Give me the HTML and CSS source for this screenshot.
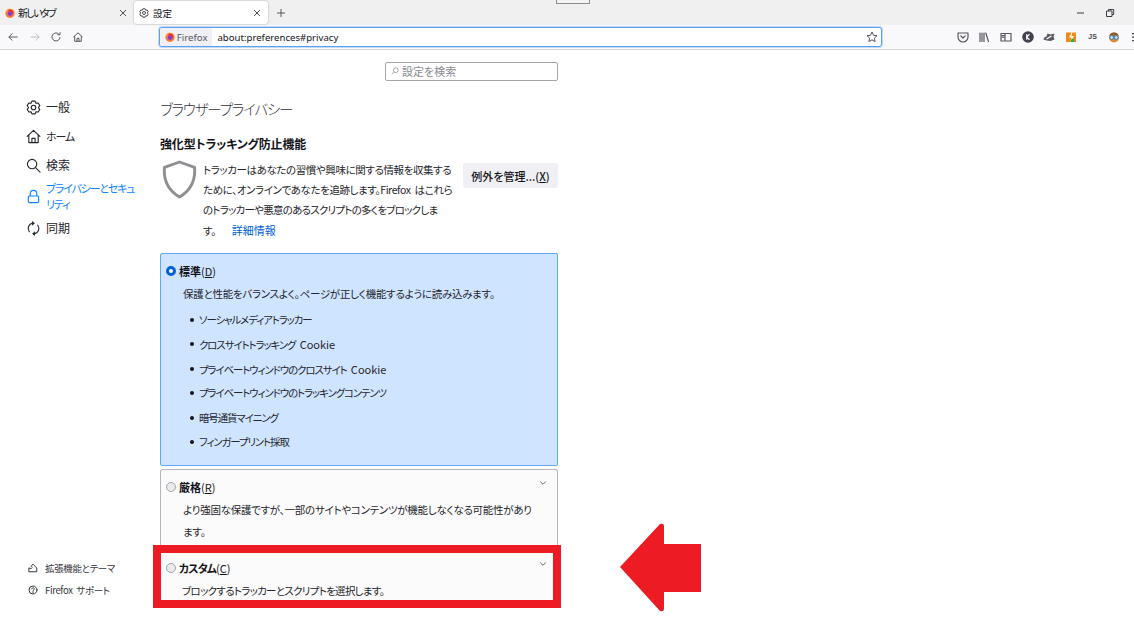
FILE: index.html
```html
<!DOCTYPE html>
<html lang="ja">
<head>
<meta charset="utf-8">
<title>設定</title>
<link rel="stylesheet" href="styles.css">
</head>
<body>
<svg class="defs" width="0" height="0">
  <defs>
    <symbol id="ff" viewBox="0 0 16 16">
      <circle cx="8" cy="8.400" r="7.400" fill="#f9792c"/>
      <path d="M3 2.500C2 4 .6 6 .8 8.400c2-4 6-6 9.400-6C8 1 5 1 3 2.500Z" fill="#ffb32b"/>
      <circle cx="8.200" cy="8.800" r="3.800" fill="#7542e5"/>
      <path d="M5 3c3-1.500 7 0 8 3 .6 2-1 5-4 5 2-1 2-3 .5-4C8 6 5.500 6 5 3Z" fill="#e5304a"/>
    </symbol>
    <symbol id="gear" viewBox="0 0 16 16">
      <path d="M6.310 1.210H9.690L10.600 3.500 13.030 3.140 14.730 6.070 13.200 8 14.730 9.930 13.030 12.860 10.600 12.500 9.690 14.790H6.310L5.400 12.500 2.970 12.860 1.270 9.930 2.800 8 1.270 6.070 2.970 3.140 5.400 3.500Z" fill="none" stroke="currentColor" stroke-width="1.200" stroke-linejoin="round"/>
      <circle cx="8" cy="8" r="2.400" fill="none" stroke="currentColor" stroke-width="1.200"/>
    </symbol>
  </defs>
</svg>

<header class="chrome">
  <div class="tabbar">
    <div class="tab">
      <svg class="tab-icon"><use href="#ff"/></svg>
      <span class="tab-label tab-kana">新しいタブ</span>
      <svg class="tab-close" viewBox="0 0 10 10"><path d="M2 2l6 6M8 2l-6 6"/></svg>
    </div>
    <div class="tab tab-active">
      <svg class="tab-icon"><use href="#gear"/></svg>
      <span class="tab-label">設定</span>
      <svg class="tab-close" viewBox="0 0 10 10"><path d="M2 2l6 6M8 2l-6 6"/></svg>
    </div>
    <svg class="tab-new" viewBox="0 0 10 10"><path d="M5 1v8M1 5h8"/></svg>
    <div class="grip"></div>
    <div class="win-controls">
      <svg class="win-btn" viewBox="0 0 10 10"><path d="M1 5h7"/></svg>
      <svg class="win-btn win-restore" viewBox="0 0 10 10"><path d="M1.500 3h5.500v5.500H1.500zM3.500 3V1.500H8.700V6.500H7"/></svg>
    </div>
  </div>
  <div class="navbar">
    <div class="nav-left">
      <svg class="nav-ico" viewBox="0 0 12 12"><path d="M10.500 6H1.800M5.300 2.500 1.800 6l3.500 3.500"/></svg>
      <svg class="nav-ico nav-off" viewBox="0 0 12 12"><path d="M1.500 6h8.700M6.700 2.500 10.200 6l-3.500 3.500"/></svg>
      <svg class="nav-ico" viewBox="0 0 12 12"><path d="M10 6a4 4 0 1 1-1.300-3M10 1.200V3.800H7.400"/></svg>
      <svg class="nav-ico" viewBox="0 0 12 12"><path d="M1.500 6 6 1.800 10.500 6M2.700 5.200V10.300H9.300V5.200M5 10.300V7.300H7v3"/></svg>
    </div>
    <div class="urlbar">
      <div class="identity">
        <svg class="tab-icon"><use href="#ff"/></svg>
        <span>Firefox</span>
      </div>
      <span class="url">about:preferences#privacy</span>
      <svg class="star" viewBox="0 0 12 12"><path d="M6 1l1.500 3.300 3.500.4-2.600 2.400.7 3.500L6 8.800l-3.100 1.800.7-3.500L1 4.700l3.500-.4Z"/></svg>
    </div>
    <div class="nav-right">
      <svg class="ext" viewBox="0 0 12 12"><path class="ln" d="M1 2h10v4a5 5 0 0 1-10 0ZM3.800 4.800 6 7l2.200-2.200"/></svg>
      <svg class="ext" viewBox="0 0 12 12"><path class="ln" d="M2 2v8.500M4 2v8.500M6 2v8.500M7.800 2l2.700 8.500"/></svg>
      <svg class="ext" viewBox="0 0 12 12"><path class="ln" d="M1 2.500h10v7.500H1zM5 2.500V10M2.300 4.500h1.500M2.300 6.200h1.500"/></svg>
      <svg class="ext" viewBox="0 0 12 12"><circle cx="6" cy="6" r="5.800" fill="#42414d"/><path class="lw" d="M4.700 3.300v5.400M7.500 3.300 4.700 6l2.800 2.700"/></svg>
      <svg class="ext" viewBox="0 0 12 12"><path d="M.5 8.500c0-2 2-3 3-3l1-3 3 1 4-1-1 3 1 3-4 1.500-4-.5Z" fill="#5b5b66"/><path class="lw" d="M3.500 8l5-3"/></svg>
      <svg class="ext" viewBox="0 0 12 12"><path d="M1 1.500h10v9.500H1Z" fill="#f28a18"/><path d="M7.500 0 4 6.500h2.500L5.500 11 9 5H6.500Z" fill="#fff"/><path d="M6 8.500l3-1V11H6Z" fill="#39a845"/></svg>
      <span class="ext ext-js">JS</span>
      <svg class="ext" viewBox="0 0 12 12"><circle cx="6" cy="6.500" r="5" fill="#d98b3a"/><path d="M1.200 4.500C2.500 .5 9.500 .5 10.800 4.500Z" fill="#8a5a2a"/><circle cx="3.700" cy="6.500" r="1.900" fill="#bfe3f5" stroke="#3a78b8"/><circle cx="8.300" cy="6.500" r="1.900" fill="#bfe3f5" stroke="#3a78b8"/></svg>
      <svg class="ext-more" viewBox="0 0 2 12"><path d="M0 2h2v1.200H0zM0 5.500h2v1.200H0zM0 9h2v1.200H0z"/></svg>
    </div>
  </div>
</header>

<div class="page">
  <nav class="side">
    <ul class="side-list">
      <li class="side-item">
        <svg class="side-ico"><use href="#gear"/></svg><span>一般</span>
      </li>
      <li class="side-item">
        <svg class="side-ico" viewBox="0 0 16 16"><path class="ln" d="M1.200 7.800 8 1.500l6.800 6.300M3 6.500v8h10v-8M6.300 14.500V10h3.400v4.500"/></svg><span class="side-kana">ホーム</span>
      </li>
      <li class="side-item">
        <svg class="side-ico" viewBox="0 0 16 16"><circle class="ln" cx="6.500" cy="6.500" r="5"/><path class="ln" d="M10.200 10.200 15 15"/></svg><span>検索</span>
      </li>
      <li class="side-item side-current">
        <svg class="side-ico" viewBox="0 0 16 16"><path class="ln" d="M4.500 7.500V5a3.500 3.500 0 0 1 7 0v2.500M3.500 7.500h9a1.500 1.500 0 0 1 1 1v5a1.500 1.500 0 0 1-1 1h-9a1.500 1.500 0 0 1-1-1v-5a1.500 1.500 0 0 1 1-1Z"/></svg><span class="side-kana">プライバシーとセキュ<br>リティ</span>
      </li>
      <li class="side-item">
        <svg class="side-ico" viewBox="0 0 16 16"><path class="ln" d="M3.500 11.500A5.800 5.800 0 0 1 7 2.300M12.500 4.500A5.800 5.800 0 0 1 9 13.700"/><path d="M6.500 0v5l3-2.500ZM9.500 16v-5l-3 2.500Z" fill="currentColor"/></svg><span>同期</span>
      </li>
    </ul>
    <ul class="side-foot">
      <li class="foot-item">
        <svg class="foot-ico" viewBox="0 0 12 12"><path class="ln" d="M1.500 10.500h9V6L6 1.500 3.500 4 5 5.500 3.500 7 1.500 6Z"/></svg><span>拡張機能とテーマ</span>
      </li>
      <li class="foot-item">
        <svg class="foot-ico" viewBox="0 0 12 12"><circle class="ln" cx="6" cy="6" r="4.800"/><path class="ln" d="M4.500 4.700a1.500 1.500 0 1 1 2.200 1.400c-.5.300-.7.500-.7 1M6 8.200v.9"/></svg><span>Firefox サポート</span>
      </li>
    </ul>
  </nav>

  <main class="content">
    <div class="search">
      <svg class="search-ico" viewBox="0 0 10 10"><circle cx="6" cy="4" r="3"/><path d="M3.800 6.200 1 9"/></svg>
      <span>設定を検索</span>
    </div>
    <h1 class="title">ブラウザープライバシー</h1>
    <h2 class="subtitle">強化型トラッキング防止機能</h2>
    <div class="intro">
      <svg class="shield" viewBox="0 0 36 40"><path d="M18 2 33.500 7.500C34.500 20 30 31 18 38 6 31 1.500 20 2.500 7.500Z"/></svg>
      <p class="intro-text">トラッカーはあなたの習慣や興味に関する情報を収集する<br>ために、オンラインであなたを追跡します。Firefox はこれら<br><span class="intro-tight">のトラッカーや悪意のあるスクリプトの多くをブロックしま</span><br>す。 <a class="link">詳細情報</a></p>
      <div class="btn">例外を管理...(<u>X</u>)</div>
    </div>

    <section class="card card-on">
      <div class="card-head"><span class="radio radio-on"></span><b>標準</b><span>(<u>D</u>)</span></div>
      <p class="card-desc">保護と性能をバランスよく。ページが正しく機能するように読み込みます。</p>
      <ul class="bullets">
        <li>ソーシャルメディアトラッカー</li>
        <li>クロスサイトトラッキング <span class="latin">Cookie</span></li>
        <li>プライベートウィンドウのクロスサイト <span class="latin">Cookie</span></li>
        <li>プライベートウィンドウのトラッキングコンテンツ</li>
        <li>暗号通貨マイニング</li>
        <li>フィンガープリント採取</li>
      </ul>
    </section>

    <section class="card card-off">
      <div class="card-head"><span class="radio"></span><b>厳格</b><span>(<u>R</u>)</span>
        <svg class="chev" viewBox="0 0 8 6"><path d="M1.200 1.500 4 4.300l2.800-2.800"/></svg></div>
      <p class="card-desc">より強固な保護ですが、一部のサイトやコンテンツが機能しなくなる可能性があり<br>ます。</p>
    </section>

    <section class="card card-off card-custom">
      <div class="card-head"><span class="radio"></span><b>カスタム</b><span>(<u>C</u>)</span>
        <svg class="chev" viewBox="0 0 8 6"><path d="M1.200 1.500 4 4.300l2.800-2.800"/></svg></div>
      <p class="card-desc">ブロックするトラッカーとスクリプトを選択します。</p>
    </section>
  </main>
</div>

<div class="mark-box"></div>
<svg class="mark-arrow" viewBox="0 0 81 89"><path d="M40 1Q44 0 44 3V21H81V69H44V86Q44 89 40 88L0 44Z"/></svg>
</body>
</html>
```
FILE: styles.css
```css
* { box-sizing: border-box; }
html, body { margin: 0; height: 620px; overflow: hidden; background: #fff; }
body {
  font-family: "Noto Sans CJK JP", "Liberation Sans", sans-serif;
  font-feature-settings: "palt";
  color: #15141a;
  font-size: 11px;
  position: relative;
}
ul { list-style: none; margin: 0; padding: 0; }
.defs { position: absolute; }
.ln { fill: none; stroke: currentColor; stroke-width: 1.200; stroke-linejoin: round; stroke-linecap: round; }
.lw { fill: none; stroke: #fff; stroke-width: 1.200; }

.chrome { height: 50px; border-bottom: 1px solid #d5d5da; }
.tabbar { height: 25px; background: #f0f0f0; display: flex; align-items: center; padding-left: 1px; position: relative; }
.tab { width: 133px; height: 23px; display: flex; align-items: center; padding: 0 5px 0 4px; font-size: 9.500px; }
.tab-active { width: 134px; background: #fff; border-radius: 3px; box-shadow: 0 0 2px rgba(0,0,0,.35); padding-left: 5px; }
.tab-icon { width: 10px; height: 10px; flex: none; }
.tab-label { margin-left: 3px; flex: 1; white-space: nowrap; }
.tab-active .tab-label { margin-left: 4px; }
.tab-kana { letter-spacing: -1.700px; font-size: 10px; }
.tab-close { width: 10px; height: 10px; fill: none; stroke: #3a3a44; stroke-width: .9; margin-right: 1px; flex: none; }
.tab-new { width: 10px; height: 10px; margin-left: 8px; fill: none; stroke: #4a4a52; stroke-width: .9; flex: none; }
.grip { position: absolute; left: 556px; top: 0; width: 34px; height: 4px; background: #f4f4f6; border: 1px solid #8c8c8c; border-top: 0; }
.win-controls { margin-left: auto; display: flex; gap: 19px; padding-right: 19px; align-items: center; }
.win-btn { width: 10px; height: 10px; fill: none; stroke: #3c3c44; stroke-width: 1; }

.navbar { height: 24px; background: #f9f9fb; display: flex; align-items: center; padding-left: 7px; }
.nav-left { display: flex; width: 152px; gap: 9.700px; align-items: center; }
.nav-ico { width: 12px; height: 12px; fill: none; stroke: #45454f; stroke-width: .9; flex: none; }
.nav-off { stroke: #b9b9bf; }
.urlbar { width: 724px; height: 20px; background: #fff; border: 1px solid #5aa0ee; border-radius: 3px; box-shadow: 0 0 0 1px rgba(90,160,238,.35); display: flex; align-items: center; font-size: 9.600px; font-family: "Noto Sans", "Liberation Sans", sans-serif; }
.identity { height: 18px; background: #f0f0f4; display: flex; align-items: center; gap: 2px; padding: 0 5px; color: #55555f; border-radius: 2px 0 0 2px; }
.url { margin-left: 5px; flex: 1; color: #15141a; }
.star { width: 12px; height: 12px; fill: none; stroke: #45454f; stroke-width: .9; margin-right: 3px; }
.nav-right { margin-left: 74.500px; display: flex; align-items: center; gap: 9.700px; }
.ext { width: 12px; height: 12px; color: #55555f; flex: none; }
.ext-js { font: 700 7px/12px "Liberation Sans", sans-serif; color: #45454f; text-align: center; }
.ext-more { width: 2px; height: 12px; flex: none; margin-left: 2px; fill: #45454f; }

.page { height: 570px; display: flex; position: relative; }
.side { width: 160px; flex: none; position: relative; padding: 47px 0 0 26px; }
.side-list { display: flex; flex-direction: column; gap: 9px; }
.side-item { display: flex; align-items: center; width: 125px; min-height: 20px; font-size: 12px; line-height: 16px; color: #26252b; }
.side-item span { margin-left: 5px; white-space: nowrap; }
.side-ico { width: 15px; height: 15px; flex: none; color: #26252b; }
.side-kana { font-size: 11px; letter-spacing: -1.200px; }
.side-current { margin: -4px 0 -3px; }
.side-current, .side-current .side-ico { color: #0a84ff; }
.side-foot { position: absolute; left: 28px; top: 510px; display: flex; flex-direction: column; gap: 6px; }
.foot-item { display: flex; align-items: center; height: 16px; font-size: 9.500px; letter-spacing: -.35px; word-spacing: 2px; color: #36353c; }
.foot-item span { margin-left: 7px; }
.foot-ico { width: 10px; height: 10px; flex: none; }

.content { width: 398px; flex: none; display: flex; flex-direction: column; }
.search { align-self: flex-end; width: 173px; height: 19px; margin-top: 12px; border: 1px solid #a5a5ab; border-radius: 2px; display: flex; align-items: center; padding: 0 0 1px 5px; color: #8a8a92; font-size: 11px; }
.search-ico { width: 8px; height: 8px; fill: none; stroke: #77777f; stroke-width: .8; margin-right: 3px; }
.title { margin: 16px 0 0; font-weight: 300; font-size: 14.500px; letter-spacing: -1.200px; line-height: 24px; color: #33323a; }
.subtitle { margin: 14px 0 0; font-size: 12px; letter-spacing: -.15px; line-height: 18px; font-weight: 700; }
.intro { display: flex; margin-top: 7px; align-items: flex-start; height: 93px; }
.shield { width: 35px; height: 39px; flex: none; fill: none; stroke: #8f8f93; stroke-width: 3; stroke-linejoin: round; margin-left: 2px; }
.intro-text { margin: 0 0 0 6px; font-size: 10.500px; letter-spacing: -.4px; word-spacing: 2px; line-height: 20px; color: #26252b; white-space: nowrap; }
.intro-tight { letter-spacing: -.75px; }
.link { color: #0060df; margin-left: 12px; font-size: 11px; letter-spacing: 0; }
.btn { margin-left: auto; margin-top: 3px; width: 95px; height: 25px; background: #f0f0f4; border-radius: 3px; display: flex; align-items: center; justify-content: center; font-size: 11px; font-weight: 500; white-space: nowrap; }

.card { border: 1px solid #b5b5bb; border-radius: 2px; padding: 9px 5px 0 5px; }
.card-on { height: 213px; flex: none; background: #cfe4ff; border-color: #63a8f0; }
.card-off { height: 81px; flex: none; background: #fbfbfb; margin-top: 3px; }
.card-custom { height: 55px; margin-top: 0; border-radius: 0; }
.card-head { display: flex; align-items: center; height: 16px; font-size: 11px; position: relative; }
.card-head b { font-weight: 700; margin-left: 3px; }
.card-custom b { letter-spacing: -.9px; }
.radio { width: 10px; height: 10px; border-radius: 50%; border: 1px solid #a5a5ab; background: #ebebee; flex: none; }
.radio-on { border: 3px solid #0060df; background: #fff; }
.card-desc { margin: 4px 0 0 17px; font-size: 10.500px; letter-spacing: -.27px; line-height: 21.500px; color: #26252b; white-space: nowrap; }
.card-custom .card-desc { letter-spacing: -.7px; margin-left: 16px; }
.bullets { margin: 3.500px 0 0 33px; }
.bullets li { position: relative; height: 24.400px; line-height: 24.400px; font-size: 10.400px; letter-spacing: -1.050px; word-spacing: 3px; color: #26252b; white-space: nowrap; }
.bullets li::before { content: ""; position: absolute; left: -9px; top: 10px; width: 4px; height: 4px; border-radius: 50%; background: #15141a; }
.latin { font-size: 11px; letter-spacing: 0; }
.chev { position: absolute; right: 5px; top: 1px; width: 8px; height: 6px; fill: none; stroke: #55555f; stroke-width: .9; }

.mark-box { position: absolute; left: 153px; top: 545px; width: 408px; height: 63px; border: 8px solid #ed1c24; }
.mark-arrow { position: absolute; left: 620px; top: 523px; width: 81px; height: 89px; fill: #ed1c24; }
```
